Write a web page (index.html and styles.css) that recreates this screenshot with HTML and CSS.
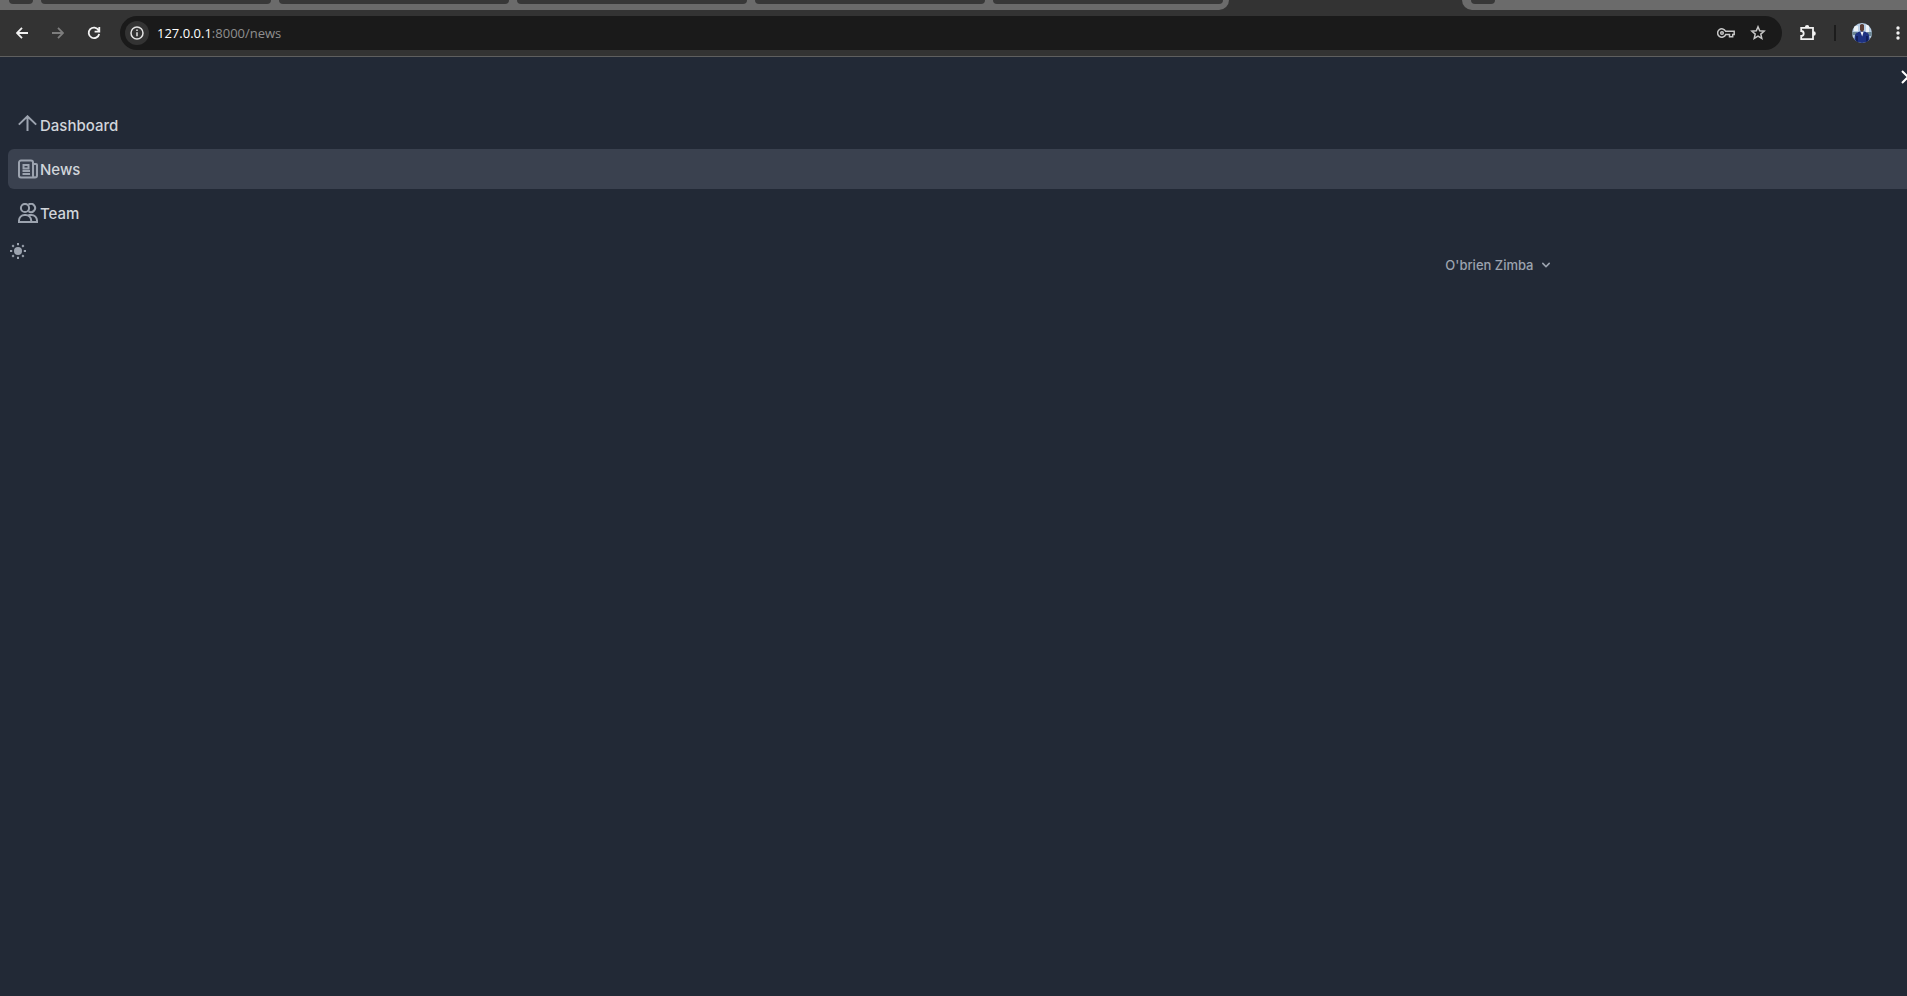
FILE: index.html
```html
<!DOCTYPE html>
<html lang="en">
<head>
  <meta charset="UTF-8">
  <title>News</title>
  <link rel="stylesheet" href="styles.css">
</head>
<body>

<div class="tabstrip">
  <div class="tab-group group-left">
    <div class="tab tab-small"></div>
    <div class="tab"></div>
    <div class="tab"></div>
    <div class="tab"></div>
    <div class="tab"></div>
    <div class="tab"></div>
  </div>
  <div class="tab-active"></div>
  <div class="tab-group group-right">
    <div class="tab tab-small"></div>
  </div>
</div>

<div class="toolbar">
  <button type="button" class="tool" aria-label="Back">
    <svg width="12" height="12" viewBox="0 0 12 12"><path d="M12 6H1M6 .8L.9 6 6 11.2"/></svg>
  </button>
  <button type="button" class="tool tool-off" aria-label="Forward">
    <svg width="12" height="12" viewBox="0 0 12 12"><path d="M0 6h11M6 .8L11.1 6 6 11.2"/></svg>
  </button>
  <button type="button" class="tool" aria-label="Reload">
    <svg width="14" height="14" viewBox="0 0 14 14"><path d="M11.6 4.2A5.3 5.3 0 1 0 12.2 8M12.3 1v4.6H7.6"/></svg>
  </button>

  <div class="address">
    <button type="button" class="info" aria-label="Site information">
      <svg width="14" height="14" viewBox="0 0 14 14"><circle cx="7" cy="7" r="6"/><path d="M7 6.2v4M7 3.6v1.5"/></svg>
    </button>
    <span class="url"><b>127.0.0.1</b>:8000/news</span>
    <button type="button" class="address-btn" aria-label="Passwords">
      <svg width="18" height="12" viewBox="0 0 18 12"><path d="M8.6 4.2h8.6v3.400h-1.500v2.200h-3.200V7.600H8.700A4.200 4.200 0 1 1 8.600 4.200z"/><circle cx="5" cy="6" r="1.300"/></svg>
    </button>
    <button type="button" class="address-btn" aria-label="Bookmark">
      <svg width="16" height="16" viewBox="0 0 16 16"><path d="M8 1.800l1.700 4 4.400.4-3.300 2.900 1 4.300L8 11.100l-3.800 2.300 1-4.300-3.300-2.900 4.400-.4z"/></svg>
    </button>
  </div>

  <button type="button" class="tool extensions" aria-label="Extensions">
    <svg width="18" height="18" viewBox="0 0 18 18"><path d="M2.200 3.800H14v11.400H2.200v-3.200a2.500 2.500 0 0 0 0-5z"/><path class="solid" d="M6.800 3.200a1.300 1.300 0 0 1 2.600 0zM14.600 8.200a1.300 1.300 0 0 1 0 2.600z"/></svg>
  </button>
  <span class="divider"></span>
  <button type="button" class="tool avatar" aria-label="Profile">
    <svg width="20" height="20" viewBox="0 0 20 20">
      <clipPath id="face"><circle cx="10" cy="10" r="10"/></clipPath>
      <g clip-path="url(#face)">
        <path fill="#b9cfe6" d="M0 0h20v20H0z"/>
        <path fill="#eef3f8" d="M2 3h4v5H2zM14 2h3v7h-3z"/>
        <path fill="#6d8795" d="M0 9h5v3H0zM15 9h5v4h-5z"/>
        <path fill="#1e3282" d="M3 12q1-3 5-3.500h4q4 .500 5 3.500l1 8H2z"/>
        <path fill="#111f5c" d="M4 13h2v7H4zM14 13h2v7h-2z"/>
        <path fill="#f3f5f8" d="M8.500 9h3l-1.300 4.500z"/>
        <path fill="#5a3d36" d="M8 2q2-2 4 0v5q-2 3.500-4 0z"/>
      </g>
    </svg>
  </button>
  <button type="button" class="tool menu" aria-label="Menu">
    <svg width="4" height="16" viewBox="0 0 4 16"><circle cx="2" cy="3" r="1.700"/><circle cx="2" cy="8" r="1.700"/><circle cx="2" cy="13" r="1.700"/></svg>
  </button>
</div>

<div class="page">
  <div class="close-row">
    <button type="button" class="close" aria-label="Close sidebar">
      <svg width="24" height="24" viewBox="0 0 24 24"><path d="M6 18L18 6M6 6l12 12"/></svg>
    </button>
  </div>

  <nav class="sidebar">
    <a href="#">
      <svg width="20" height="20" viewBox="0 0 20 20"><path d="M.8 9.600L9.500 1.300l8.700 8.300M9.500 1.500V16"/></svg>
      <span>Dashboard</span>
    </a>
    <a href="#" class="active">
      <svg width="20" height="20" viewBox="0 0 20 20"><path d="M17 18.500H3a2 2 0 0 1-2-2V3.500a2 2 0 0 1 2-2h10a2 2 0 0 1 2 2v13a2 2 0 0 0 4 0V6a1 1 0 0 0-1-1h-3M5.500 6h5v3.500h-5zM4.500 12h7.500M4.500 15H12"/></svg>
      <span>News</span>
    </a>
    <a href="#">
      <svg width="20" height="20" viewBox="0 0 20 20"><circle cx="7" cy="5" r="4.100"/><path d="M10.500 1.700a4.100 4.100 0 1 1 0 6.600M1 19v-1.500a5.500 5.500 0 0 1 5.500-5.500h1.200a5.500 5.500 0 0 1 5.500 5.500V19zM10.500 12h3a5.500 5.500 0 0 1 5.500 5.500V19h-6"/></svg>
      <span>Team</span>
    </a>
  </nav>

  <header class="topbar">
    <button type="button" class="theme" aria-label="Toggle theme">
      <svg width="20" height="20" viewBox="0 0 20 20"><circle cx="10" cy="10" r="4"/><path d="M10 2v2.200M10 15.800V18M2 10h2.200M15.800 10H18M4.300 4.300l1.500 1.500M14.200 14.200l1.500 1.500M4.300 15.700l1.500-1.500M14.200 5.800l1.500-1.500"/></svg>
    </button>
    <button type="button" class="user">
      O'brien Zimba
      <svg width="16" height="16" viewBox="0 0 20 20"><path d="M5.293 7.293a1 1 0 0 1 1.414 0L10 10.586l3.293-3.293a1 1 0 1 1 1.414 1.414l-4 4a1 1 0 0 1-1.414 0l-4-4a1 1 0 0 1 0-1.414z"/></svg>
    </button>
  </header>
</div>

</body>
</html>
```
FILE: styles.css
```css
* {
  box-sizing: border-box;
}

body {
  margin: 0;
  min-height: 100vh;
  display: flex;
  flex-direction: column;
  background-color: #222936;
  font-family: Inter, "Open Sans", sans-serif;
  overflow: hidden;
}

button {
  display: flex;
  align-items: center;
  justify-content: center;
  padding: 0;
  border: none;
  background: none;
  font-family: inherit;
  cursor: pointer;
}

svg {
  display: block;
  flex-shrink: 0;
  fill: none;
  stroke: currentColor;
}

/* browser tabs */
.tabstrip {
  display: flex;
  height: 10px;
  background-color: #333333;
}

.tab-group {
  display: flex;
  gap: 8px;
  padding: 0 6px 6px 9px;
  background-color: #6b6b6b;
}

.group-left {
  border-bottom-right-radius: 10px;
}

.group-right {
  flex: 1;
  border-bottom-left-radius: 10px;
}

.tab {
  width: 230px;
  background-color: #383838;
  border-radius: 0 0 8px 8px;
}

.tab-small {
  width: 24px;
}

.tab-active {
  width: 233px;
}

/* browser toolbar */
.toolbar {
  display: flex;
  align-items: center;
  height: 47px;
  padding-left: 4px;
  margin-right: -9px;
  background-color: #333333;
  border-bottom: 1px solid #5f5f5f;
}

.tool {
  width: 36px;
  height: 34px;
  color: #f2f2f2;
  stroke-width: 1.8;
}

.tool-off {
  color: #7d7d7d;
}

.address {
  flex: 1;
  display: flex;
  align-items: center;
  height: 34px;
  margin-left: 8px;
  padding: 0 8px 0 5px;
  background-color: #1a1a1a;
  border-radius: 17px;
}

.info {
  width: 24px;
  height: 24px;
  border-radius: 50%;
  background-color: #333333;
  color: #e3e3e3;
  stroke-width: 1.5;
}

.url {
  flex: 1;
  margin-left: 8px;
  font-family: "Open Sans", sans-serif;
  font-size: 13px;
  color: #8f8f8f;
}

.url b {
  font-weight: normal;
  color: #ffffff;
}

.address-btn {
  width: 32px;
  height: 32px;
  color: #c7c7c7;
  stroke-width: 1.5;
}

.extensions {
  margin-left: 8px;
}

.solid {
  fill: currentColor;
}

.divider {
  width: 2px;
  height: 16px;
  margin: 0 8px;
  background-color: #1c1c1c;
}

.avatar svg {
  stroke: none;
}

.menu {
  stroke-width: 0;
}

.menu svg {
  fill: currentColor;
}

/* page */
.page {
  flex: 1;
  color: #d1d5db;
}

.close-row {
  display: flex;
  justify-content: flex-end;
  padding-top: 8px;
  margin-right: -13px;
}

.close {
  color: #ffffff;
  stroke-width: 2;
}

.sidebar {
  display: flex;
  flex-direction: column;
  gap: 4px;
  padding: 16px 0 0 8px;
}

.sidebar a {
  display: flex;
  align-items: center;
  gap: 2px;
  height: 40px;
  padding: 0 10px;
  border-radius: 6px 0 0 6px;
  font-size: 15px;
  font-weight: 500;
  color: #d1d5db;
  text-decoration: none;
}

.sidebar svg {
  color: #9ca3af;
  stroke-width: 2;
}

.sidebar a:hover,
.sidebar .active {
  background-color: #3a414f;
}

.topbar {
  display: flex;
  align-items: center;
  justify-content: space-between;
  height: 64px;
  padding-left: 8px;
  padding-right: calc((100% - 1280px) / 2 + 28px);
  color: #9ca3af;
}

.theme {
  align-self: flex-start;
  margin-top: 8px;
  color: #9ca3af;
  stroke-width: 2;
}

.theme circle {
  fill: currentColor;
  stroke: none;
}

.user {
  gap: 4px;
  padding: 8px 12px;
  font-size: 13px;
  font-weight: 500;
  color: #9ca3af;
}

.user svg {
  fill: currentColor;
  stroke: none;
}
```
